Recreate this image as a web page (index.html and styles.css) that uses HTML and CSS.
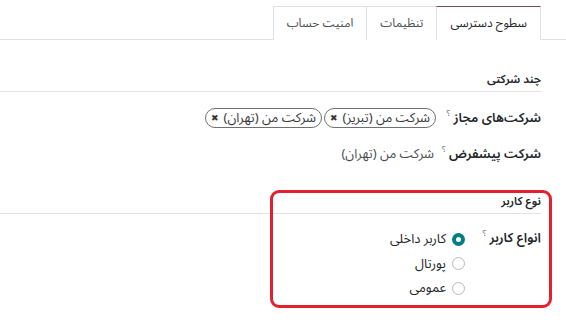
FILE: index.html
```html
<!DOCTYPE html>
<html lang="fa" dir="rtl">
<head>
<meta charset="utf-8">
<link rel="stylesheet" href="styles.css">
</head>
<body>
<div class="tabs">
  <div class="tab active">سطوح دسترسی</div>
  <div class="tab">تنظیمات</div>
  <div class="tab">امنیت حساب</div>
</div>

<div class="section first">
  <div class="sec-head"><span>چند شرکتی</span></div>
  <div class="row">
    <div class="label">شرکت‌های مجاز<sup>؟</sup></div>
    <div class="value tags">
      <span class="tag">شرکت من (تبریز)<span class="x">✖</span></span>
      <span class="tag">شرکت من (تهران)<span class="x">✖</span></span>
    </div>
  </div>
  <div class="row">
    <div class="label">شرکت پیشفرض<sup>؟</sup></div>
    <div class="value plain">شرکت من (تهران)</div>
  </div>
</div>

<div class="section second">
  <div class="sec-head"><span>نوع کاربر</span></div>
  <div class="row radios-row">
    <div class="label narrow">انواع کاربر<sup>؟</sup></div>
    <div class="value radios">
      <div class="opt"><span class="radio checked"></span>کاربر داخلی</div>
      <div class="opt"><span class="radio"></span>پورتال</div>
      <div class="opt"><span class="radio"></span>عمومی</div>
    </div>
  </div>
  <div class="highlight"></div>
</div>
</body>
</html>
```
FILE: styles.css
```css
html, body {
  margin: 0;
  padding: 0;
  background: #fff;
}
body {
  font-family: "Noto Sans Arabic", "Liberation Sans", sans-serif;
  font-size: 13px;
  color: #212529;
  width: 566px;
  height: 323px;
  overflow: hidden;
}
.tabs {
  display: flex;
  padding: 6px 25px 0 0;
  border-bottom: 1px solid #dee2e6;
  height: 33px;
}
.tab {
  box-sizing: border-box;
  height: 34px;
  padding: 0 13px;
  display: flex;
  align-items: center;
  border: 1px solid #dee2e6;
  border-bottom: none;
  margin-left: -1px;
  color: #4a4f55;
  font-size: 12px;
  white-space: nowrap;
  background: #fff;
}
.tab.active {
  border-top: 1px solid #714b67;
  color: #212529;
  position: relative;
  z-index: 1;
}
.section {
  position: relative;
  padding-right: 25px;
}
.section.first { margin-top: 30px; }
.section.second { margin-top: 27px; }
.sec-head {
  border-bottom: 1px solid #e2e2e2;
  padding-bottom: 2px;
  font-size: 11.5px;
  font-weight: 600;
  color: #212529;
  line-height: 19px;
}
.row {
  display: flex;
  align-items: flex-start;
  margin-top: 15px;
}
.row + .row { margin-top: 14px; }
.label {
  width: 105px;
  flex: none;
  font-weight: 600;
  font-size: 13px;
  line-height: 22px;
  white-space: nowrap;
}
.label.narrow { width: 75px; }
.label sup {
  font-size: 9px;
  font-weight: normal;
  color: #666;
  margin-right: 3px;
  vertical-align: 6px;
  line-height: 0;
}
.value { line-height: 22px; white-space: nowrap; }
.tags {
  display: flex;
  gap: 2px;
  align-items: center;
  height: 22px;
}
.tag {
  display: inline-flex;
  align-items: center;
  box-sizing: border-box;
  border: 1px solid #707070;
  border-radius: 10px;
  height: 20px;
  padding: 0 5px;
  font-size: 13px;
  color: #3a3a3a;
  line-height: 18px;
}
.tag .x {
  font-family: "DejaVu Sans", sans-serif;
  font-size: 9px;
  margin-right: 5px;
  color: #333;
}
.plain {
  color: #4b4f54;
  margin-right: 2px;
}
.radios-row { margin-top: 13px; }
.radios { display: flex; flex-direction: column; }
.opt {
  display: flex;
  align-items: center;
  height: 24.5px;
  font-size: 13px;
  color: #212529;
}
.radio {
  box-sizing: border-box;
  width: 13px;
  height: 13px;
  border: 1px solid #b8b8b8;
  border-radius: 50%;
  margin-left: 6px;
  margin-right: 1px;
}
.radio.checked {
  border: 4px solid #017e84;
}
.highlight {
  position: absolute;
  left: 270px;
  top: -2px;
  width: 282px;
  height: 118px;
  box-sizing: border-box;
  border: 3px solid #e3202f;
  border-radius: 9px;
}
```
